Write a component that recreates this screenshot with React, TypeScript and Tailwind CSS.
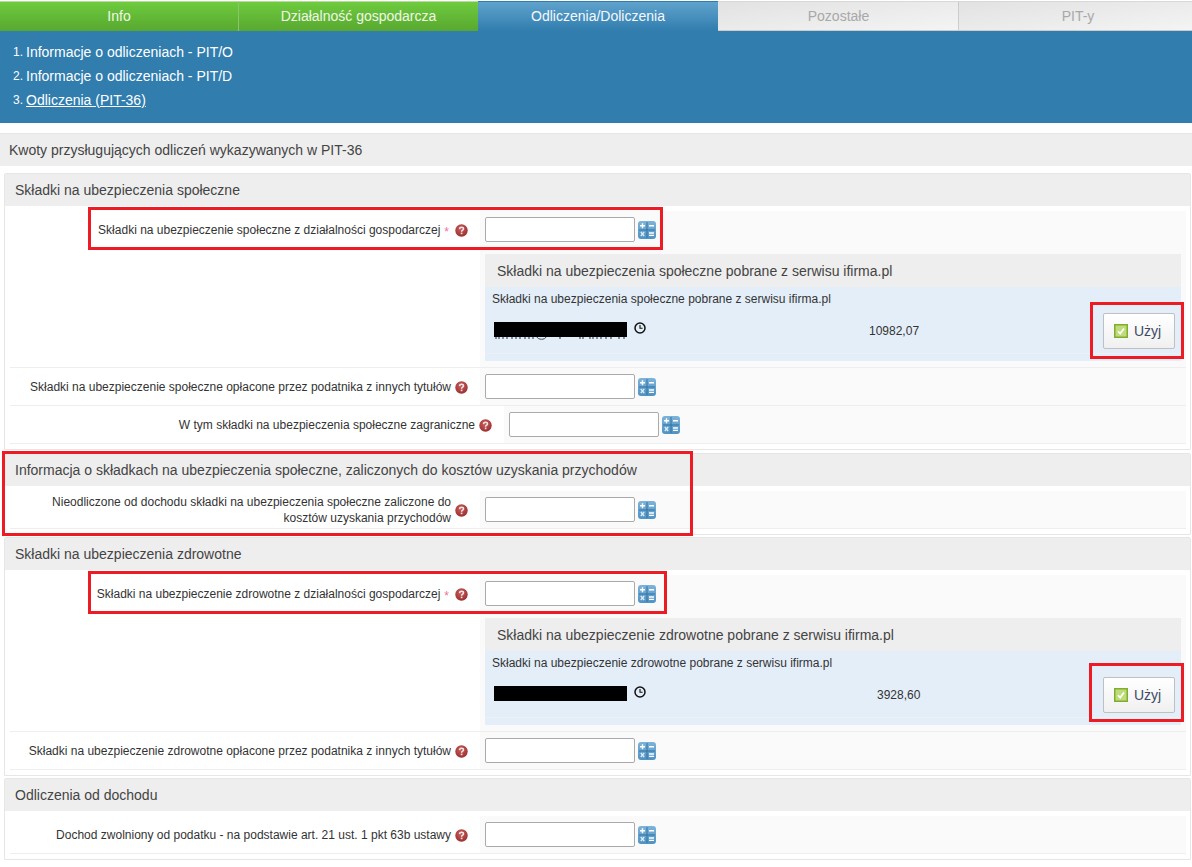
import React from "react";

function Help() {
  return (
    <svg width="13" height="13" viewBox="0 0 13 13" className="shrink-0 mt-[1px]">
      <defs>
        <radialGradient id="hg" cx="45%" cy="35%" r="70%">
          <stop offset="0%" stopColor="#c9605f" />
          <stop offset="100%" stopColor="#962c2b" />
        </radialGradient>
      </defs>
      <circle cx="6.5" cy="6.5" r="6.2" fill="url(#hg)" />
      <path d="M4.5 5.1C4.6 3.9 5.4 3.3 6.5 3.3C7.7 3.3 8.5 4 8.5 4.9C8.5 6.2 6.6 6.2 6.6 7.7" fill="none" stroke="#f4e4e4" strokeWidth="1.5" />
      <rect x="5.8" y="8.6" width="1.6" height="1.6" fill="#f4e4e4" />
    </svg>
  );
}

function Calc() {
  return (
    <svg width="18" height="18" viewBox="0 0 18 18" className="shrink-0">
      <defs>
        <linearGradient id="cg" x1="0" y1="0" x2="0" y2="1">
          <stop offset="0%" stopColor="#7db3da" />
          <stop offset="100%" stopColor="#4f93c4" />
        </linearGradient>
      </defs>
      <rect x="0" y="0" width="18" height="18" rx="3" fill="url(#cg)" />
      <rect x="1" y="8.5" width="16" height="1" fill="#35729f" />
      <rect x="8.5" y="1" width="1" height="16" fill="#35729f" />
      <path d="M2 4.7H7M4.5 2.2V7.2M11 4.7H16M11 12H16M11 14.4H16" stroke="#ffffff" strokeWidth="1.4" fill="none" />
      <path d="M2.8 11L6.2 15M6.2 11L2.8 15" stroke="#e4eef6" strokeWidth="1.2" fill="none" />
    </svg>
  );
}

function Clock() {
  return (
    <svg width="12" height="12" viewBox="0 0 12 12" className="shrink-0">
      <circle cx="6" cy="6" r="5" fill="none" stroke="#111" strokeWidth="1.5" />
      <path d="M6 3V6.3H8.6" fill="none" stroke="#111" strokeWidth="1.1" />
    </svg>
  );
}

function Field() {
  return (
    <div className="flex items-center gap-[3px]">
      <div className="w-[150px] h-[25px] bg-white border border-[#aaaaaa] rounded-[2px]" />
      <Calc />
    </div>
  );
}

function Row({
  label,
  required = false,
  indent = false,
  children,
}: {
  label: React.ReactNode;
  required?: boolean;
  indent?: boolean;
  children?: React.ReactNode;
}) {
  return (
    <div className="flex min-h-[37px] border-b border-[#eeeeee]">
      <div className={`flex items-start justify-end shrink-0 ${indent ? "w-[494px]" : "w-[470px]"}`}>
        <div className="flex items-center justify-end h-[37px]">
          <div className="text-right text-[12px] leading-[16px] text-[#333333]">{label}</div>
          {required && <span className="text-[#f0709a] text-[12px] ml-[4px] translate-y-[2px]">*</span>}
          <span className={`${required ? "ml-[6px]" : "ml-[4px]"} mr-[12px]`}>
            <Help />
          </span>
        </div>
      </div>
      <div className="flex-1 bg-[#fafafa] pl-[5px] pt-[6px]">
        <Field />
        {children}
      </div>
    </div>
  );
}

function Remnant() {
  return (
    <svg width="133" height="4" viewBox="0 0 133 4" className="absolute left-0 top-[15px]">
      <path
        d="M2 0V2M5 0V2M9 0V2M13 0V2M18 0V2M22 0V2M26 0V2M31 0V2M35 0V2M39 0V2M66 0V2M86 0V2M89 0V2M96 0V2M99 0V2M103 0V2M107 0V2M112 0V2M117 0V2M125 0V2M130 0V2"
        stroke="#3d4d66"
        strokeWidth="1.2"
        fill="none"
      />
      <path d="M43 0C44 3 51 3 52 0" stroke="#3d4d66" strokeWidth="1" fill="none" />
    </svg>
  );
}

function Info({ title, value, valueClass, leak }: { title: string; value: string; valueClass: string; leak?: boolean }) {
  return (
    <div className="w-[696px] mt-[12px] mb-[6px]">
      <div className="h-[33px] bg-[#eeeeee] flex items-center pl-[12px] pt-[2px] text-[14px] text-[#444444]">{title}</div>
      <div className="h-[74px] bg-[#e4eef9] relative">
        <div className="h-[67px] border-b border-[#ecf1f6] pl-[7px] pt-[4px]">
          <div className="text-[12px] leading-[16px] text-[#333333]">{title}</div>
          <div className="flex items-start mt-[15px]">
            <div className="relative ml-[2px] w-[133px] h-[15px] bg-black">{leak && <Remnant />}</div>
            <span className="ml-[7px]">
              <Clock />
            </span>
            <span className={`text-[12px] leading-[16px] text-[#333333] mt-[1px] ${valueClass}`}>{value}</span>
          </div>
        </div>
        <button className="absolute left-[618px] top-[26px] w-[72px] h-[36px] pr-[3px] bg-gradient-to-b from-[#ffffff] to-[#f0f0f0] border border-[#c0c0c0] rounded-[2px] flex items-center justify-center gap-[6px] text-[14px] text-[#3c4a66]">
          <svg width="14" height="14" viewBox="0 0 14 14">
            <rect x="0.75" y="0.75" width="12.5" height="12.5" fill="#bfdc7a" stroke="#7fae2e" strokeWidth="1.5" />
            <path d="M4 7.2L6.2 9.6L10 4.6" fill="none" stroke="#ffffff" strokeWidth="1.7" />
          </svg>
          Użyj
        </button>
      </div>
    </div>
  );
}

function Section({ title, children, top }: { title: string; children: React.ReactNode; top: string }) {
  return (
    <div className={`ml-[4px] w-[1187px] border border-[#e6e6e6] rounded-t-[2px] bg-white ${top}`}>
      <div className="h-[32px] bg-[#eeeeee] flex items-center pl-[10px] text-[14px] text-[#444444]">{title}</div>
      <div className="pl-[5px] pr-[4px] pt-[5px] pb-[5px]">{children}</div>
    </div>
  );
}

function RedBox({ className }: { className: string }) {
  return <div className={`absolute border-[3px] border-[#ed1c24] pointer-events-none ${className}`} />;
}

const tabs = [
  { label: "Info", w: "w-[239px]", cls: "bg-gradient-to-b from-[#6ecb3e] to-[#58a82f] text-[#f0f6e6] border-t-[#b8dca0] border-r border-r-[#8cc46c]" },
  { label: "Działalność gospodarcza", w: "w-[239px]", cls: "bg-gradient-to-b from-[#6ecb3e] to-[#58a82f] text-[#f0f6e6] border-t-[#b8dca0]" },
  { label: "Odliczenia/Doliczenia", w: "w-[240px]", cls: "bg-gradient-to-b from-[#5fa3cd] to-[#307dae] text-[#f4f8fb] border-t-[#307dae]" },
  { label: "Pozostałe", w: "w-[241px] pl-[1px]", cls: "bg-gradient-to-br from-[#e2e2e2] to-[#f4f4f4] text-[#a8a8a8] border-t-[#d8d8d8] border-r border-r-[#cccccc] border-b border-b-[#cccccc]" },
  { label: "PIT-y", w: "flex-1 pl-[5px]", cls: "bg-gradient-to-br from-[#e2e2e2] to-[#f4f4f4] text-[#a8a8a8] border-t-[#d8d8d8] border-b border-b-[#cccccc]" },
];

export default function App() {
  return (
    <div className="relative w-[1192px] h-[867px] overflow-hidden bg-white font-['Liberation_Sans',Arial,sans-serif]">
      <div className="flex h-[31px] pt-[1px]">
        {tabs.map((t) => (
          <div key={t.label} className={`${t.w} border-t ${t.cls} flex items-center justify-center text-[14px]`}>
            {t.label}
          </div>
        ))}
      </div>
      <div className="h-[92px] bg-[#307dae] text-white pl-[13px] pt-[9px]">
        {["Informacje o odliczeniach - PIT/O", "Informacje o odliczeniach - PIT/D"].map((t, i) => (
          <div key={t} className="h-[24px] flex items-center text-[14px]">
            <span className="text-[12px] w-[13px]">{i + 1}.</span>
            {t}
          </div>
        ))}
        <div className="h-[24px] flex items-center text-[14px]">
          <span className="text-[12px] w-[13px]">3.</span>
          <span className="underline">Odliczenia (PIT-36)</span>
        </div>
      </div>
      <div className="mt-[10px] h-[33px] bg-[#eeeeee] border-t border-[#e6e6e6] flex items-center pl-[9px] text-[14px] text-[#444444]">
        Kwoty przysługujących odliczeń wykazywanych w PIT-36
      </div>

      <Section title="Składki na ubezpieczenia społeczne" top="mt-[7px]">
        <Row label="Składki na ubezpieczenie społeczne z działalności gospodarczej" required>
          <Info title="Składki na ubezpieczenia społeczne pobrane z serwisu ifirma.pl" value="10982,07" valueClass="ml-[223px]" leak />
        </Row>
        <Row label="Składki na ubezpieczenie społeczne opłacone przez podatnika z innych tytułów" />
        <Row label="W tym składki na ubezpieczenia społeczne zagraniczne" indent />
      </Section>

      <Section title="Informacja o składkach na ubezpieczenia społeczne, zaliczonych do kosztów uzyskania przychodów" top="mt-[3px]">
        <Row label={<>Nieodliczone od dochodu składki na ubezpieczenia społeczne zaliczone do<br />kosztów uzyskania przychodów</>} />
      </Section>

      <Section title="Składki na ubezpieczenia zdrowotne" top="mt-[2px]">
        <Row label="Składki na ubezpieczenie zdrowotne z działalności gospodarczej" required>
          <Info title="Składki na ubezpieczenie zdrowotne pobrane z serwisu ifirma.pl" value="3928,60" valueClass="ml-[231px]" />
        </Row>
        <Row label="Składki na ubezpieczenie zdrowotne opłacone przez podatnika z innych tytułów" />
      </Section>

      <Section title="Odliczenia od dochodu" top="mt-[2px]">
        <Row label="Dochod zwolniony od podatku - na podstawie art. 21 ust. 1 pkt 63b ustawy" />
      </Section>

      <RedBox className="left-[88px] top-[207px] w-[575px] h-[43px]" />
      <RedBox className="left-[1090px] top-[302px] w-[94px] h-[57px]" />
      <RedBox className="left-[2px] top-[451px] w-[691px] h-[85px]" />
      <RedBox className="left-[88px] top-[571px] w-[579px] h-[43px]" />
      <RedBox className="left-[1089px] top-[663px] w-[95px] h-[59px]" />
    </div>
  );
}
